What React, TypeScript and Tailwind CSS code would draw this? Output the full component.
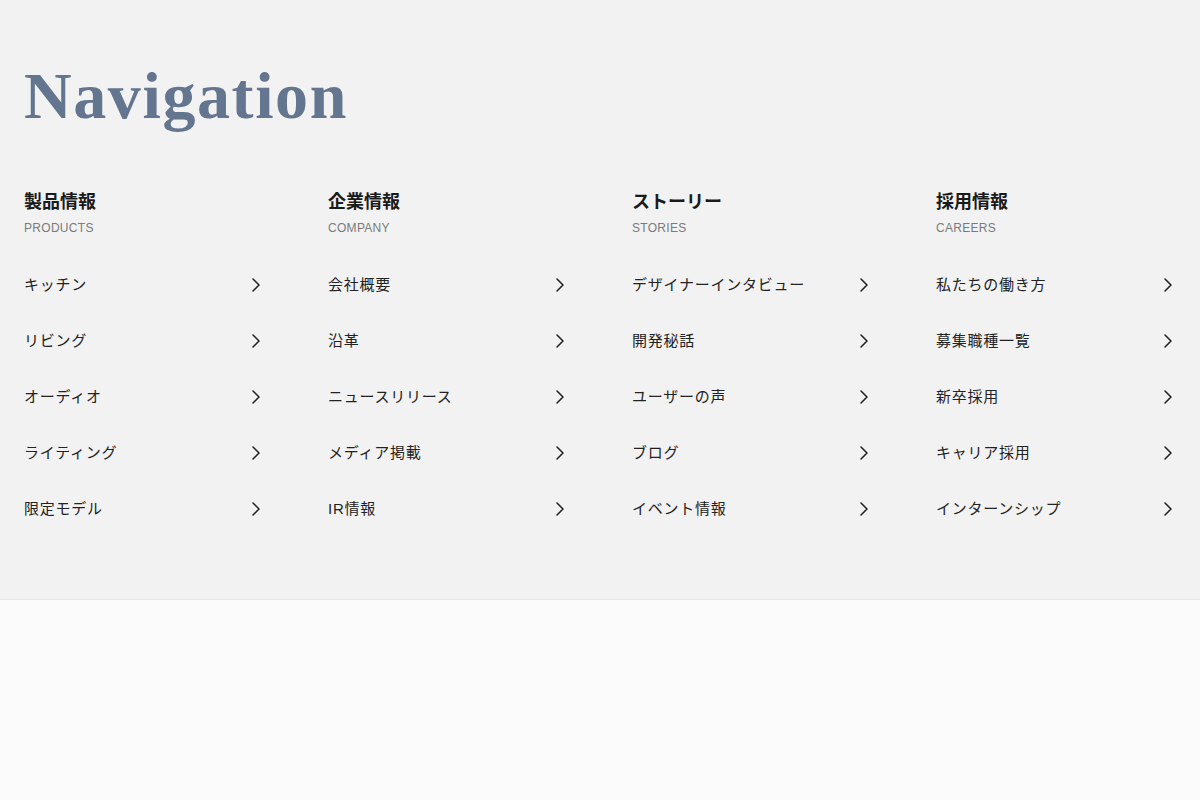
type Section = {
  title: string;
  label: string;
  links: string[];
};

const sections: Section[] = [
  {
    title: "製品情報",
    label: "PRODUCTS",
    links: ["キッチン", "リビング", "オーディオ", "ライティング", "限定モデル"],
  },
  {
    title: "企業情報",
    label: "COMPANY",
    links: ["会社概要", "沿革", "ニュースリリース", "メディア掲載", "IR情報"],
  },
  {
    title: "ストーリー",
    label: "STORIES",
    links: ["デザイナーインタビュー", "開発秘話", "ユーザーの声", "ブログ", "イベント情報"],
  },
  {
    title: "採用情報",
    label: "CAREERS",
    links: ["私たちの働き方", "募集職種一覧", "新卒採用", "キャリア採用", "インターンシップ"],
  },
];

function Chevron() {
  return (
    <svg width="24" height="24" viewBox="0 0 24 24" fill="none" className="shrink-0">
      <path d="M13 6l6 6-6 6" stroke="#1f1f1f" strokeWidth="1.5" strokeLinecap="round" strokeLinejoin="round" />
    </svg>
  );
}

export default function App() {
  return (
    <div
      className="min-h-screen bg-[#fbfbfb]"
      style={{ fontFamily: '"Liberation Sans", "Noto Sans CJK JP", sans-serif' }}
    >
      <nav className="bg-[#f2f2f2] border-b border-[#e8e8e8] px-6 pt-[63px] pb-[62px]">
        <h2 className="font-['Liberation_Serif',serif] font-bold text-[66px] leading-none text-[#647590] tracking-[1.6px]">
          Navigation
        </h2>

        <div className="grid grid-cols-4 gap-16 mt-[61px]">
          {sections.map((s) => (
            <div key={s.label}>
              <h3 className="text-lg font-bold leading-6 text-[#1a1a1a]">{s.title}</h3>
              <p className="mt-[6px] text-xs tracking-[0.3px] text-[#7a7a7a]">{s.label}</p>
              <ul className="mt-[21px]">
                {s.links.map((l) => (
                  <li
                    key={l}
                    className="flex items-center justify-between h-14 text-[15px] tracking-[0.05em] text-[#222]"
                  >
                    <span>{l}</span>
                    <Chevron />
                  </li>
                ))}
              </ul>
            </div>
          ))}
        </div>
      </nav>
    </div>
  );
}
